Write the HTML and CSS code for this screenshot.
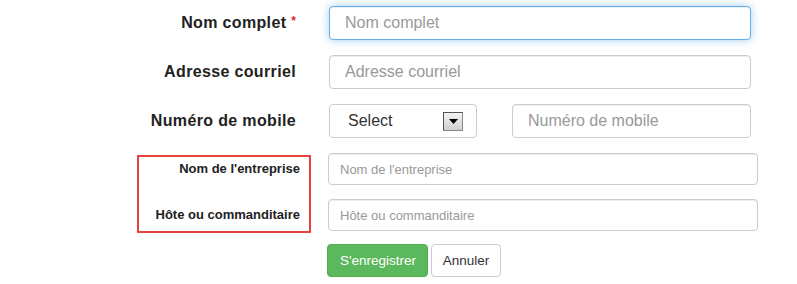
FILE: index.html
```html
<!DOCTYPE html>
<html lang="fr">
<head>
<meta charset="utf-8">
<title>Inscription</title>
<link rel="stylesheet" href="styles.css">
</head>
<body>
<form class="form">
  <div class="top">
    <div class="row">
      <label class="label">Nom complet<span class="req">*</span></label>
      <div class="field"><input class="input input-focus" placeholder="Nom complet"></div>
    </div>
    <div class="row">
      <label class="label">Adresse courriel</label>
      <div class="field"><input class="input" placeholder="Adresse courriel"></div>
    </div>
    <div class="row">
      <label class="label">Numéro de mobile</label>
      <div class="field phone">
        <div class="select">
          <span class="select-text">Select</span>
          <span class="select-btn"><svg width="9" height="5" viewBox="0 0 9 5"><path d="M0 0h9L4.5 5z" fill="#000"/></svg></span>
        </div>
        <input class="input mobile" placeholder="Numéro de mobile">
      </div>
    </div>
  </div>
  <div class="bottom">
    <div class="labels-box">
      <div class="small-label">Nom de l'entreprise</div>
      <div class="small-label">Hôte ou commanditaire</div>
    </div>
    <div class="small-fields">
      <input class="input small" placeholder="Nom de l'entreprise">
      <input class="input small" placeholder="Hôte ou commanditaire">
      <div class="actions">
        <button type="button" class="btn btn-success">S'enregistrer</button>
        <button type="button" class="btn btn-default">Annuler</button>
      </div>
    </div>
  </div>
</form>
</body>
</html>
```

FILE: styles.css
```css
* { box-sizing: border-box; }
html, body { margin: 0; padding: 0; background: #fff; }
body {
  font-family: "Liberation Sans", Arial, sans-serif;
  color: #333;
  width: 797px;
  height: 284px;
  overflow: hidden;
}
.form { padding-top: 6px; }
.top { display: flex; flex-direction: column; gap: 15px; }
.row {
  display: grid;
  grid-template-columns: 296px 422px;
  column-gap: 33px;
  align-items: center;
}
.label {
  text-align: right;
  font-weight: bold;
  font-size: 16px;
  letter-spacing: 0.35px;
  color: #222;
  white-space: nowrap;
}
.req {
  display: inline-block;
  color: #e4262b;
  font-size: 12px;
  letter-spacing: 0;
  vertical-align: 3px;
  margin-left: 5px;
}
.field { display: flex; }
.input {
  display: block;
  width: 100%;
  height: 34px;
  border: 1px solid #ccc;
  border-radius: 4px;
  padding: 0 15px;
  font-family: "Liberation Sans", Arial, sans-serif;
  font-size: 16px;
  color: #555;
  background: #fff;
  box-shadow: inset 0 1px 1px rgba(0,0,0,.075);
  outline: none;
}
.input::placeholder { color: #999; }
.input-focus {
  border-color: #66afe9;
  box-shadow: inset 0 1px 1px rgba(0,0,0,.075), 0 0 8px rgba(102,175,233,.6);
}
.phone { gap: 35px; }
.select {
  flex: 0 0 148px;
  height: 34px;
  border: 1px solid #ccc;
  border-radius: 4px;
  display: flex;
  align-items: center;
  justify-content: space-between;
  padding: 0 13px 0 18px;
}
.select-text { font-size: 16px; color: #333; }
.select-btn {
  width: 20px;
  height: 19px;
  border: 1px solid #555;
  border-right-color: #888;
  border-bottom-color: #888;
  background: linear-gradient(#f4f4f4, #cfcfcf);
  display: flex;
  align-items: center;
  justify-content: center;
}
.mobile { flex: 0 0 239px; width: 239px; }
.bottom {
  display: flex;
  align-items: flex-start;
  margin-top: 15px;
  padding-left: 137px;
  gap: 17px;
}
.labels-box {
  width: 174px;
  margin-top: 2px;
  border: 2px solid #e8423f;
  padding: 0 9px 5px 0;
  display: flex;
  flex-direction: column;
  gap: 23px;
}
.small-label {
  height: 23px;
  line-height: 23px;
  text-align: right;
  font-weight: bold;
  font-size: 13px;
  color: #222;
  white-space: nowrap;
}
.small-fields {
  width: 430px;
  display: flex;
  flex-direction: column;
  gap: 14px;
}
.input.small {
  height: 32px;
  font-size: 13px;
  padding: 0 11px;
}
.actions {
  display: flex;
  gap: 3px;
  margin-top: -1px;
  margin-left: -1px;
}
.btn {
  height: 33px;
  border-radius: 4px;
  font-family: "Liberation Sans", Arial, sans-serif;
  font-size: 13.5px;
  padding: 0 12px;
  border: 1px solid;
  cursor: pointer;
}
.btn-success { background: #5cb85c; border-color: #4cae4c; color: #fff; width: 101px; }
.btn-default { background: #fff; border-color: #ccc; color: #333; width: 70px; padding: 0 10px; }
```
